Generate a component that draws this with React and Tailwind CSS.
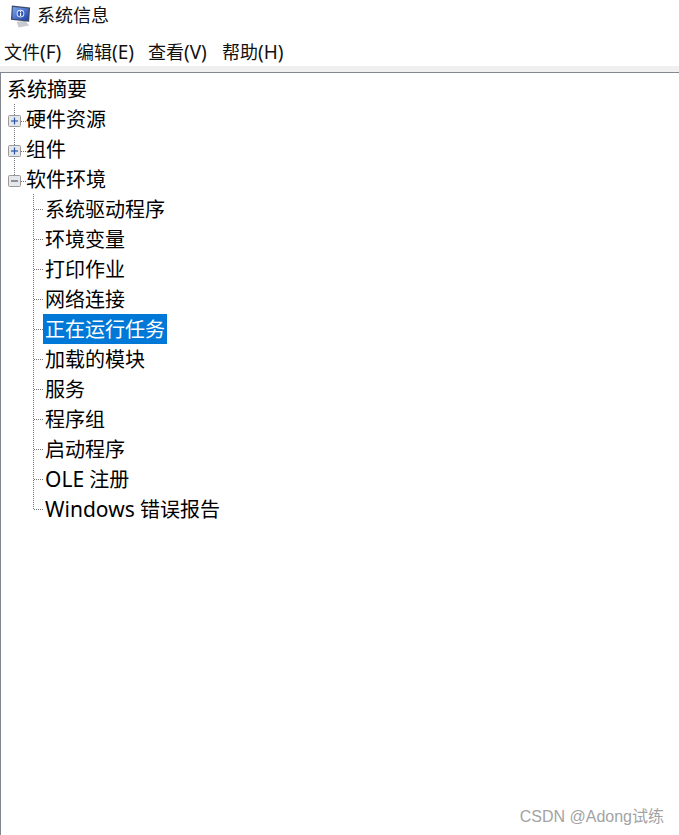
const FONT = 'font-["Noto_Sans","Noto_Sans_CJK_SC",sans-serif]';

function Dots({ x1, y1, x2, y2 }) {
  return <line x1={x1} y1={y1} x2={x2} y2={y2} stroke="#777" strokeWidth="1" strokeDasharray="1 1" />;
}

function Box({ open }) {
  return (
    <g>
      <rect x="7.5" y="11.5" width="12" height="11" rx="1" fill="#e4e7ec" stroke="#9a9a9a" />
      <line x1="10" y1="17" x2="17" y2="17" stroke={open ? "#555" : "#2f55a4"} strokeWidth="1.2" />
      {!open && <line x1="13.5" y1="13.5" x2="13.5" y2="20.5" stroke="#2f55a4" strokeWidth="1.2" />}
    </g>
  );
}

function TopRow({ label, open }) {
  return (
    <div className="flex h-[30px] items-center">
      <svg width="25" height="30" className="shrink-0">
        <Dots x1="13.5" y1={0} x2="13.5" y2={open ? 12 : 30} />
        <Dots x1="20" y1="17.5" x2="25" y2="17.5" />
        <Box open={open} />
      </svg>
      <span className="mt-[2px] text-[20px] leading-[30px] text-black whitespace-pre">{label}</span>
    </div>
  );
}

function ChildRow({ label, latin, selected, last }) {
  return (
    <div className="flex h-[30px] items-center">
      <svg width="42" height="30" className="shrink-0">
        <Dots x1="32.5" y1={0} x2="32.5" y2={last ? 16 : 30} />
        <Dots x1="33" y1="15.5" x2="42" y2="15.5" />
      </svg>
      <span
        className={
          selected
            ? "h-[30px] bg-[#0078d7] text-white px-[2px] pt-[1px] text-[20px] leading-[30px] whitespace-pre"
            : "mt-[2px] text-[20px] leading-[30px] text-black px-[2px] whitespace-pre"
        }
      >
        {latin && <span className="text-[21px] leading-none">{latin}</span>}
        {label}
      </span>
    </div>
  );
}

function AppIcon() {
  return (
    <svg width="23" height="24" viewBox="0 0 24 24" className="mt-[3px] shrink-0">
      <defs>
        <linearGradient id="scr" x1="0" y1="0" x2="1" y2="1">
          <stop offset="0" stopColor="#7fa8ee" />
          <stop offset="1" stopColor="#1c3fa8" />
        </linearGradient>
      </defs>
      <path d="M8 18 L17 17 L21 22 L10 24 Z" fill="#c9cbce" />
      <path d="M3 1 L22 3 L21 18 L2 16 Z" fill="#3b4a6b" />
      <path d="M4 2.5 L20.5 4.2 L19.8 16.4 L3.5 14.8 Z" fill="url(#scr)" />
      <circle cx="12" cy="9.5" r="4" fill="#e8eefb" />
      <circle cx="12" cy="9.5" r="3" fill="#2a52b8" />
      <rect x="11.4" y="8.5" width="1.3" height="3.5" fill="#fff" />
      <rect x="11.4" y="6.8" width="1.3" height="1.1" fill="#fff" />
    </svg>
  );
}

function Menu({ cn, key2, w }) {
  return (
    <span className={w}>
      {cn}
      <span className="text-[19px]">({key2})</span>
    </span>
  );
}

export default function App() {
  const children = [
    ["系统驱动程序"],
    ["环境变量"],
    ["打印作业"],
    ["网络连接"],
    ["正在运行任务"],
    ["加载的模块"],
    ["服务"],
    ["程序组"],
    ["启动程序"],
    [" 注册", "OLE"],
    [" 错误报告", "Windows"],
  ];
  return (
    <div className={`relative flex h-[835px] w-[679px] flex-col overflow-hidden bg-white ${FONT}`}>
      <div className="flex h-[29px] items-center pl-[9px] gap-[5px]">
        <AppIcon />
        <span className="text-[18px] leading-[30px] text-[#111]">系统信息</span>
      </div>
      <div className="flex h-[37px] items-center pl-[4px] pt-[10px] text-[18px] text-[#111]">
        <Menu cn="文件" key2="F" w="w-[72px]" />
        <Menu cn="编辑" key2="E" w="w-[72px]" />
        <Menu cn="查看" key2="V" w="w-[74px]" />
        <Menu cn="帮助" key2="H" w="w-[70px]" />
      </div>
      <div className="h-[6px] bg-[#f0f0f0]" />
      <div className="flex-1 border-t border-l border-[#828790] pt-[1px]">
        <div className="pl-[6px] pt-[1px] h-[30px] text-[20px] leading-[30px] text-black">系统摘要</div>
        <TopRow label="硬件资源" />
        <TopRow label="组件" />
        <TopRow label="软件环境" open />
        {children.map(([c, latin], i) => (
          <ChildRow key={c} label={c} latin={latin} selected={i === 4} last={i === children.length - 1} />
        ))}
      </div>
      <div className="absolute right-[15px] bottom-[6px] font-['Liberation_Sans','Noto_Sans_CJK_SC',sans-serif] text-[16px] text-[#a3a3a3]">
        CSDN @Adong试练
      </div>
    </div>
  );
}
